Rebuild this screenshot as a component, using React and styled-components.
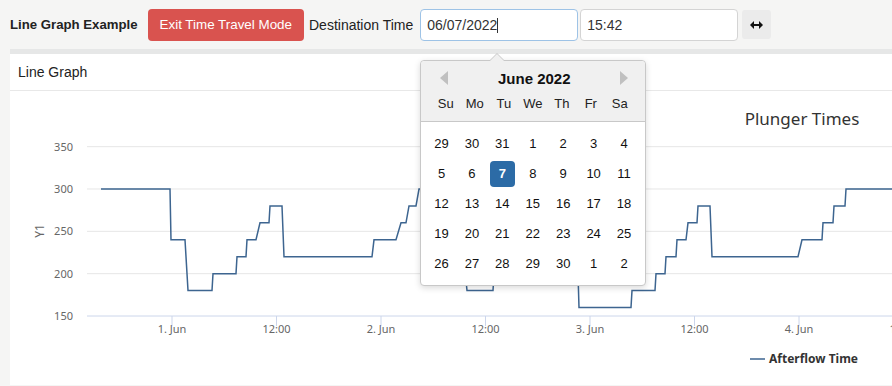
import React from "react"
import styled, { createGlobalStyle } from "styled-components"

const GlobalStyle = createGlobalStyle`
  body {
    margin: 0;
    background: #f5f5f4;
    font-family: "Liberation Sans", Arial, sans-serif;
    color: #222;
  }
`

const Page = styled.div`
  width: 892px;
  height: 386px;
  overflow: hidden;
  padding-left: 10px;
  box-sizing: border-box;
`

const Toolbar = styled.div`
  display: flex;
  align-items: center;
  height: 49px;
`

const Title = styled.div`
  font-weight: bold;
  font-size: 13.2px;
  margin-right: 10px;
`

const DangerButton = styled.button`
  height: 32px;
  padding: 0 12px;
  border: none;
  border-radius: 4px;
  background: #d9534f;
  color: #fff;
  font-family: inherit;
  font-size: 13.4px;
  margin-right: 5px;
`

const Label = styled.div`
  font-size: 14px;
  margin-right: 7px;
`

const Field = styled.div`
  position: relative;
  margin-right: ${p => p.$gap || 0}px;
`

const Input = styled.div`
  width: 158px;
  height: 32px;
  box-sizing: border-box;
  border: 1px solid ${p => (p.$focus ? "#9ec3e6" : "#d4d4d4")};
  border-radius: 4px;
  background: #fff;
  font-size: 14px;
  line-height: 30px;
  padding-left: 6px;
  color: #333;
`

const Caret = styled.span`
  display: inline-block;
  width: 1px;
  height: 15px;
  background: #333;
  vertical-align: -3px;
`

const SwapButton = styled.div`
  width: 29px;
  height: 29px;
  border-radius: 3px;
  background: #ebebeb;
  display: flex;
  align-items: center;
  justify-content: center;
`

const Calendar = styled.div`
  position: absolute;
  left: 0;
  top: 51px;
  width: 226px;
  height: 226px;
  box-sizing: border-box;
  background: #fff;
  border: 1px solid #c8c8c8;
  border-radius: 4px;
  box-shadow: 0 2px 6px rgba(0, 0, 0, 0.15);
  z-index: 5;
  &::before,
  &::after {
    content: "";
    position: absolute;
    left: 68px;
    border: 8px solid transparent;
    border-top: 0;
  }
  &::before {
    top: -8px;
    border-bottom-color: #c8c8c8;
  }
  &::after {
    top: -7px;
    border-bottom-color: #f0f0f0;
  }
`

const CalHead = styled.div`
  background: #f0f0f0;
  border-bottom: 1px solid #c8c8c8;
  border-radius: 4px 4px 0 0;
  padding: 0 5px;
`

const MonthRow = styled.div`
  display: flex;
  align-items: center;
  justify-content: space-between;
  height: 35px;
  padding: 0 12px 0 14px;
  font-weight: bold;
  font-size: 15px;
  color: #111;
`

const Grid = styled.div`
  display: grid;
  grid-template-columns: repeat(7, 1fr);
  padding: 0 6px 0 5px;
`

const WeekDay = styled.div`
  height: 25px;
  text-align: center;
  font-size: 13px;
  color: #222;
`

const Body = styled.div`
  padding-top: 7px;
`

const Day = styled.div`
  height: 30px;
  display: flex;
  align-items: center;
  justify-content: center;
  font-size: 13px;
  color: #111;
`

const Selected = styled.span`
  width: 25px;
  height: 26px;
  border-radius: 4px;
  background: #2c6ba6;
  color: #fff;
  font-weight: bold;
  display: flex;
  align-items: center;
  justify-content: center;
`

const Panel = styled.div`
  border-top: 5px solid #e6e7e7;
  background: #fff;
`

const PanelHeader = styled.div`
  height: 36px;
  line-height: 36px;
  padding-left: 8px;
  font-size: 14px;
  border-bottom: 1px solid #e8e8e8;
`

const ChartBox = styled.div`
  height: 294px;
  svg {
    display: block;
    font-family: "Noto Sans", "DejaVu Sans", sans-serif;
  }
`

const Arrow = ({ dir }) => (
  <svg width="8" height="14" viewBox="0 0 8 14">
    <polygon points={dir === "l" ? "8,0 0,7 8,14" : "0,0 8,7 0,14"} fill="#c0c0c0" />
  </svg>
)

const SwapIcon = () => (
  <svg width="13" height="8" viewBox="0 0 13 8">
    <polygon points="0,4 4,0 4,8" fill="#111" />
    <polygon points="13,4 9,0 9,8" fill="#111" />
    <rect x="3" y="3" width="7" height="2" fill="#111" />
  </svg>
)

const weekdays = ["Su", "Mo", "Tu", "We", "Th", "Fr", "Sa"]
const days = [
  29, 30, 31, 1, 2, 3, 4,
  5, 6, 7, 8, 9, 10, 11,
  12, 13, 14, 15, 16, 17, 18,
  19, 20, 21, 22, 23, 24, 25,
  26, 27, 28, 29, 30, 1, 2,
]

const y = v => 317 - (v - 150) * 0.8467

const points = [
  [101, 300], [170, 300], [171, 240], [185, 240], [188, 180], [212, 180], [213, 200],
  [236, 200], [237, 220], [246, 220], [247, 240], [256, 240], [260, 260], [269, 260],
  [270, 280], [282, 280], [284, 220], [372, 220], [374, 240], [396, 240], [401, 260],
  [406, 260], [409, 280], [416, 280], [419, 300], [440, 300], [441, 240], [462, 240],
  [467, 180], [493, 180], [494, 200], [515, 200], [516, 220], [528, 220], [529, 240],
  [540, 240], [542, 260], [552, 260], [553, 280], [576, 280], [579, 160], [631, 160],
  [632, 180], [655, 180], [656, 200], [665, 200], [666, 220], [676, 220], [677, 240],
  [686, 240], [688, 260], [697, 260], [698, 280], [710, 280], [712, 220], [798, 220],
  [802, 240], [822, 240], [823, 260], [833, 260], [834, 280], [845, 280], [846, 300],
  [892, 300],
]

const xTicks = [
  [172, "1. Jun"], [276.5, "12:00"], [381, "2. Jun"], [485.5, "12:00"],
  [590, "3. Jun"], [694.5, "12:00"], [799, "4. Jun"], [903.5, "12:00"],
]

function Chart() {
  return (
    <svg width="882" height="294" viewBox="10 92 882 294">
      {[350, 300, 250, 200].map(v => (
        <line key={v} x1="87" x2="892" y1={y(v)} y2={y(v)} stroke="#e6e6e6" />
      ))}
      <line x1="87" x2="892" y1="317" y2="317" stroke="#ccd6eb" />
      {[350, 300, 250, 200, 150].map(v => (
        <text key={v} x="73" y={y(v) + 4} fontSize="11" fill="#666" textAnchor="end">
          {v}
        </text>
      ))}
      <text x="44" y="232" fontSize="12" fill="#666" textAnchor="middle" transform="rotate(-90 44 232)">
        Y1
      </text>
      {xTicks.map(([x, t], i) => (
        <g key={i}>
          <line x1={x} x2={x} y1="317" y2="327" stroke="#ccd6eb" />
          <text x={x} y="334" fontSize="11" fill="#666" textAnchor="middle">
            {t}
          </text>
        </g>
      ))}
      <text x="802" y="126" fontSize="17" fill="#333" textAnchor="middle">
        Plunger Times
      </text>
      <polyline
        points={points.map(([px, v]) => `${px},${y(v)}`).join(" ")}
        fill="none"
        stroke="#3d6590"
        strokeWidth="1.5"
      />
      <line x1="750" x2="765" y1="360" y2="360" stroke="#3d6590" strokeWidth="1.5" />
      <text x="769" y="364" fontSize="12" fontWeight="bold" fill="#333">
        Afterflow Time
      </text>
    </svg>
  )
}

export default function App() {
  return (
    <Page>
      <GlobalStyle />
      <Toolbar>
        <Title>Line Graph Example</Title>
        <DangerButton>Exit Time Travel Mode</DangerButton>
        <Label>Destination Time</Label>
        <Field $gap={2}>
          <Input $focus>
            06/07/2022
            <Caret />
          </Input>
          <Calendar>
            <CalHead>
              <MonthRow>
                <Arrow dir="l" />
                June 2022
                <Arrow dir="r" />
              </MonthRow>
              <Grid>
                {weekdays.map(w => (
                  <WeekDay key={w}>{w}</WeekDay>
                ))}
              </Grid>
            </CalHead>
            <Body>
              <Grid>
                {days.map((d, i) => (
                  <Day key={i}>{i === 9 ? <Selected>{d}</Selected> : d}</Day>
                ))}
              </Grid>
            </Body>
          </Calendar>
        </Field>
        <Field $gap={4}>
          <Input>15:42</Input>
        </Field>
        <SwapButton>
          <SwapIcon />
        </SwapButton>
      </Toolbar>
      <Panel>
        <PanelHeader>Line Graph</PanelHeader>
        <ChartBox>
          <Chart />
        </ChartBox>
      </Panel>
    </Page>
  )
}
